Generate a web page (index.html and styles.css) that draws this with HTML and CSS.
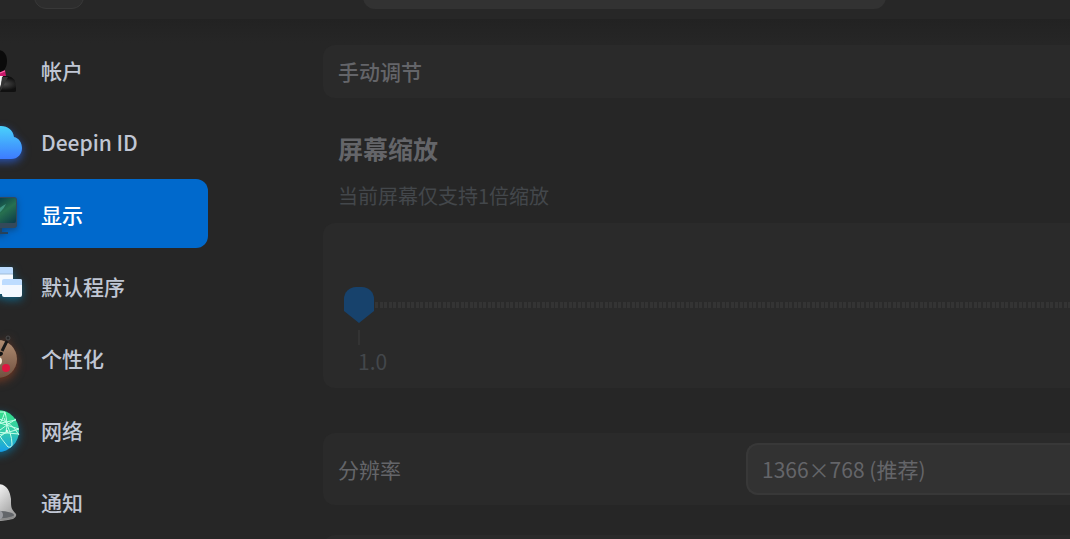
FILE: index.html
```html
<!DOCTYPE html>
<html lang="zh-CN">
<head>
  <meta charset="UTF-8" />
  <meta name="viewport" content="width=device-width, initial-scale=1.0"/>
  <title>控制中心</title>
  <link rel="stylesheet" href="styles.css">
</head>
<body>
  <header class="topbar">
    <button class="back" aria-label="返回"></button>
    <input type="search" class="search" aria-label="搜索" />
  </header>

  <div class="layout">
    <nav class="sidebar">
      <a class="item" href="#account">
        <svg class="icon" viewBox="0 0 48 48">
          <defs>
            <radialGradient id="suit" cx="0.68" cy="0.5" r="0.4">
              <stop offset="0" stop-color="#484848"/>
              <stop offset="1" stop-color="#101010"/>
            </radialGradient>
          </defs>
          <path d="M6 46V40Q6 31 16 30H34Q42 31 42 42V45Q42 46 40 46Z" fill="url(#suit)"/>
          <path d="M19 29H29Q28 38 24 46Q20 38 19 29Z" fill="#f4f4f4"/>
          <path d="M24 4C30 4 33 9 33 15C33 21 30 25 27 27L24 28C19 26 15 21 15 15C15 9 18 4 24 4Z" fill="#0b0b0b"/>
          <path d="M16 25L24 27L31 24L32 30L24 30L17 31Z" fill="#c9186a"/>
          <path d="M26 27L31 25" stroke="#ff70ad" stroke-width="1"/>
          <path d="M28 31L34 31L26 46Z" fill="#343434"/>
        </svg>
        <span>帐户</span>
      </a>
      <a class="item" href="#deepin-id">
        <svg class="icon glow-blue" viewBox="0 0 48 48">
          <defs>
            <linearGradient id="cloud" x1="0" y1="0" x2="0" y2="1">
              <stop offset="0" stop-color="#49d2fb"/>
              <stop offset="1" stop-color="#3d7bff"/>
            </linearGradient>
          </defs>
          <path d="M11 41A11 11 0 0 1 11 19C13 12 20 8 27 8C34 8 39 12 40 19C45 20 48 25 48 30C48 36 44 41 37 41Z" fill="url(#cloud)"/>
        </svg>
        <span>Deepin ID</span>
      </a>
      <a class="item active" href="#display" aria-current="page">
        <svg class="icon shade" viewBox="0 0 48 48">
          <defs>
            <linearGradient id="screen" x1="0" y1="0" x2="1" y2="1">
              <stop offset="0.3" stop-color="#0d4448"/>
              <stop offset="0.6" stop-color="#27704f"/>
              <stop offset="1" stop-color="#0b3949"/>
            </linearGradient>
          </defs>
          <path d="M18 37H28V42H34V44H14V42H18Z" fill="#26425b"/>
          <rect x="5" y="7" width="38" height="31" rx="3" fill="#34495a"/>
          <rect x="6" y="8" width="36" height="25" rx="2" fill="url(#screen)"/>
          <path d="M18 26Q25 17 32 14Q29 21 19 28Z" fill="#3f9380"/>
        </svg>
        <span>显示</span>
      </a>
      <a class="item" href="#default-apps">
        <svg class="icon glow-cyan" viewBox="0 0 48 48">
          <rect x="6" y="5" width="33" height="27" rx="2" fill="#f5faff"/>
          <path d="M6 12V7Q6 5 8 5H37Q39 5 39 7V12Z" fill="#bcdcff"/>
          <path d="M6 12H39" stroke="#a0bdd9" stroke-width="1"/>
          <rect x="28" y="17" width="20" height="18" rx="2" fill="#f3f8ff"/>
          <path d="M28 23V19Q28 17 30 17H46Q48 17 48 19V23Z" fill="#bddcff"/>
        </svg>
        <span>默认程序</span>
      </a>
      <a class="item" href="#personalization">
        <svg class="icon glow-brown" viewBox="0 0 48 48">
          <defs>
            <linearGradient id="palette" x1="0" y1="0" x2="0" y2="1">
              <stop offset="0" stop-color="#b08d72"/>
              <stop offset="1" stop-color="#70503f"/>
            </linearGradient>
          </defs>
          <ellipse cx="24" cy="26" rx="19" ry="19" fill="#592f20"/>
          <ellipse cx="24" cy="25" rx="19" ry="19" fill="url(#palette)"/>
          <circle cx="24" cy="27" r="4" fill="#eee5d2"/>
          <circle cx="32" cy="34" r="4" fill="#dc1740"/>
          <path d="M22 22Q24 17 28 18L29 19Q29 23 22 22Z" fill="#151515"/>
          <path d="M28 17L33 7" stroke="#191919" stroke-width="3"/>
          <circle cx="34" cy="4" r="2" fill="#262626" stroke="#4b4b4b" stroke-width="1"/>
        </svg>
        <span>个性化</span>
      </a>
      <a class="item" href="#network">
        <svg class="icon glow-cyan" viewBox="0 0 48 48">
          <defs>
            <linearGradient id="globe" x1="0" y1="0" x2="0" y2="1">
              <stop offset="0" stop-color="#34e087"/>
              <stop offset="0.5" stop-color="#35cda9"/>
              <stop offset="1" stop-color="#169ee8"/>
            </linearGradient>
          </defs>
          <circle cx="24" cy="25" r="21" fill="url(#globe)"/>
          <g fill="none" stroke="#c2ffe8" stroke-width="1">
            <path d="M22 6L31 6Q34 18 32 26L22 34M22 18L42 14M22 30L45 23L26 17"/>
            <path d="M22 12Q38 16 45 29M22 27Q31 20 42 13M31 6Q27 18 22 22M22 26L45 28"/>
            <path d="M22 24Q28 34 34 41Q38 42 38 38Q38 28 30 12"/>
          </g>
          <circle cx="33" cy="25" r="1" fill="#ffffff"/>
        </svg>
        <span>网络</span>
      </a>
      <a class="item" href="#notification">
        <svg class="icon" viewBox="0 0 48 48">
          <defs>
            <linearGradient id="bell" x1="0" y1="0" x2="1" y2="1">
              <stop offset="0.3" stop-color="#f0f0f0"/>
              <stop offset="1" stop-color="#8c8c8c"/>
            </linearGradient>
          </defs>
          <path d="M24 6C33 6 36 13 37 21C37 29 37 31 42 36Q43 39 39 41Q24 45 9 41Q5 39 6 36C11 31 11 29 11 21C12 13 15 6 24 6Z" fill="url(#bell)"/>
          <ellipse cx="24" cy="37" rx="16" ry="4" fill="#63666a"/>
          <path d="M8 39Q24 44 40 39" fill="none" stroke="#8b8b8b" stroke-width="2"/>
          <circle cx="24" cy="37" r="5" fill="#9a9ca1"/>
        </svg>
        <span>通知</span>
      </a>
    </nav>

    <main class="content">
      <section class="card manual">手动调节</section>

      <h2 class="title" id="scale-title">屏幕缩放</h2>
      <p class="hint">当前屏幕仅支持1倍缩放</p>

      <section class="card scale">
        <input type="range" class="slider" min="1" max="2" step="1" value="1" list="scales" aria-labelledby="scale-title" disabled />
        <datalist class="scales" id="scales">
          <option value="1" label="1.0">1.0</option>
        </datalist>
      </section>

      <section class="card row">
        <label for="resolution">分辨率</label>
        <select class="resolution" id="resolution" disabled>
          <option>1366×768 (推荐)</option>
        </select>
      </section>

      <section class="card next"></section>
    </main>
  </div>
</body>
</html>
```
FILE: styles.css
```css
:root {
  --bg: #262626;
  --bar: #272727;
  --card: #2a2a2a;
  --control: #323232;
  --nav-text: #c0c6d4;
  --text: #646569;
  --muted: #43474b;
  --accent: #0069cc;
}

* {
  box-sizing: border-box;
}

body {
  margin: 0;
  height: 100vh;
  overflow: hidden;
  display: flex;
  flex-direction: column;
  background: var(--bg);
  color: var(--text);
  font-family: "Noto Sans CJK SC", sans-serif;
  font-size: 21px;
  line-height: 30px;
}

.topbar {
  flex: none;
  display: flex;
  align-items: flex-end;
  height: 19px;
  padding: 0 184px 10px 34px;
  background: var(--bar);
}

.back {
  flex: none;
  width: 50px;
  height: 48px;
  margin-right: 279px;
  border: 1px solid #383838;
  border-radius: 12px;
  background: #2d2d2d;
}

.search {
  flex: 1;
  min-width: 0;
  height: 48px;
  border: none;
  border-radius: 12px;
  background: var(--control);
  color: var(--text);
  font: inherit;
}

.layout {
  flex: 1;
  min-height: 0;
  display: flex;
  overflow: hidden;
  background: linear-gradient(#222222, #262626 24px);
}

.sidebar {
  flex: none;
  display: flex;
  flex-direction: column;
  gap: 3px;
  width: 286px;
  margin-left: -44px;
  padding: 16px 34px 0 0;
}

.item {
  flex: none;
  display: flex;
  align-items: center;
  gap: 19px;
  height: 69px;
  padding-left: 18px;
  border-radius: 12px;
  color: var(--nav-text);
  font-weight: 500;
  text-decoration: none;
}

.item.active {
  background: var(--accent);
  color: #ffffff;
}

.icon {
  flex: none;
  width: 48px;
  height: 48px;
  overflow: visible;
}

.shade {
  filter: drop-shadow(0 2px 3px #0b4680);
}

.glow-blue {
  filter: drop-shadow(0 3px 4px #2852b0);
}

.glow-cyan {
  filter: drop-shadow(0 3px 4px #126080);
}

.glow-brown {
  filter: drop-shadow(0 3px 4px #6b3825);
}

.content {
  flex: 1;
  min-width: 0;
  padding: 26px 0 0 81px;
}

.card {
  padding-left: 15px;
  border-radius: 12px 0 0 12px;
  background: var(--card);
}

.manual {
  padding-top: 11px;
  padding-bottom: 12px;
  font-weight: 500;
}

.title {
  margin: 32px 0 0 15px;
  font-size: 25px;
  font-weight: 700;
  line-height: 36px;
}

.hint {
  margin: 15px 0 12px 15px;
  color: var(--muted);
  font-size: 20px;
  line-height: 30px;
}

.scale {
  height: 165px;
  padding-top: 64px;
  padding-left: 21px;
}

.slider {
  appearance: none;
  -webkit-appearance: none;
  display: block;
  width: 100%;
  height: 36px;
  margin: 0;
  background: repeating-linear-gradient(to right, #343434 0 3px, transparent 3px 5px, #343434 5px 8px, transparent 8px 9px) 31px center / 100% 6px no-repeat;
}

.slider::-webkit-slider-thumb {
  appearance: none;
  -webkit-appearance: none;
  width: 30px;
  height: 36px;
  border-radius: 12px 12px 0 0;
  background: #17426c;
  clip-path: polygon(0 0, 100% 0, 100% 24px, 50% 100%, 0 24px);
}

.scales {
  display: block;
  margin: 7px 0 0 14px;
  color: var(--muted);
}

.scales::before {
  content: "";
  display: block;
  width: 2px;
  height: 15px;
  background: #333333;
}

.scales option {
  min-height: 0;
  padding: 0;
  font-size: 21px;
  line-height: 32px;
}

.row {
  display: flex;
  align-items: center;
  justify-content: space-between;
  height: 72px;
  margin-top: 45px;
}

.resolution {
  appearance: none;
  -webkit-appearance: none;
  width: 324px;
  height: 52px;
  padding: 0 14px;
  border: 2px solid #383838;
  border-right: none;
  border-radius: 12px 0 0 12px;
  background: var(--control);
  color: var(--text);
  font: inherit;
  opacity: 1;
}

.next {
  height: 72px;
  margin-top: 30px;
}
```
